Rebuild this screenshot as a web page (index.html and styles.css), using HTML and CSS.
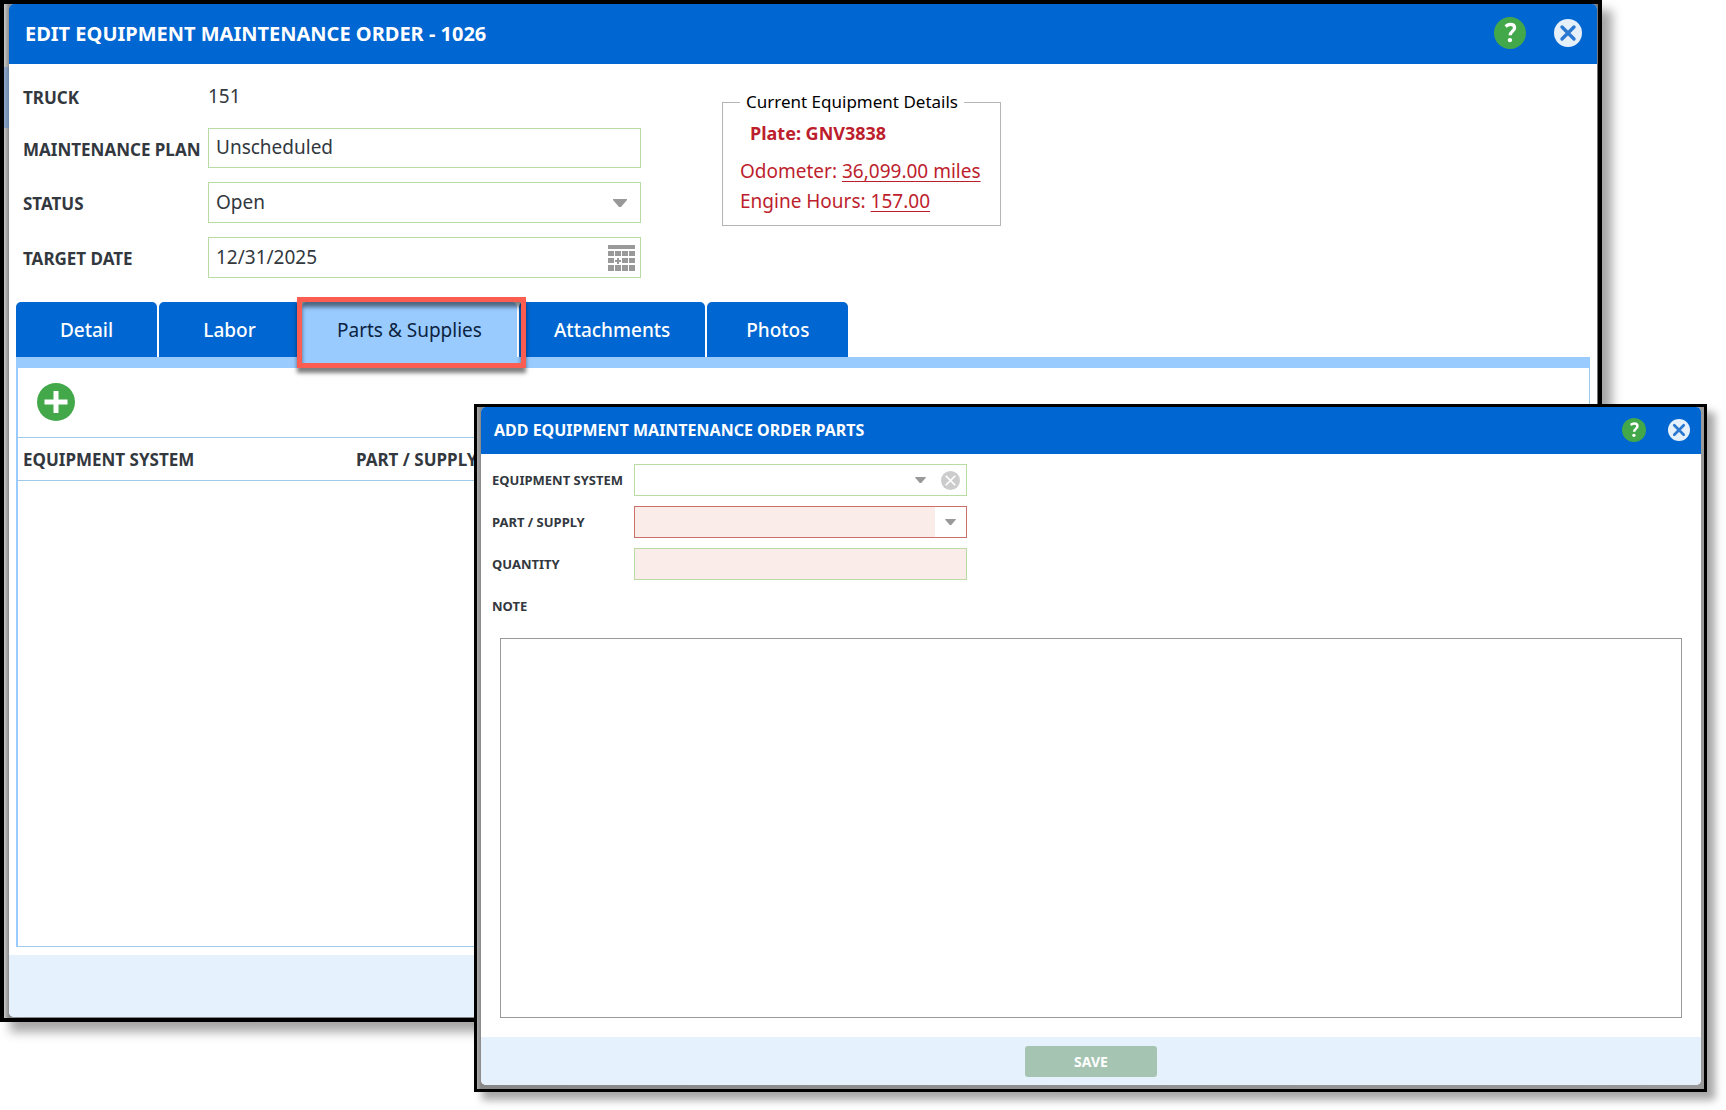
FILE: index.html
```html
<!DOCTYPE html>
<html lang="en">
<head>
<meta charset="utf-8">
<title>Edit Equipment Maintenance Order - 1026</title>
<link rel="stylesheet" href="styles.css">
</head>
<body>
<svg class="defs" width="0" height="0" aria-hidden="true">
  <symbol id="help" viewBox="0 0 32 32">
    <circle cx="16" cy="16" r="16" fill="#43a849"/>
    <path d="M11.6 9.4C13.2 8 14.900 7.400 16.400 7.400c2.500 0 4.200 1.400 4.200 3.500 0 3.100-4.400 3.500-4.400 7.400" fill="none" stroke="#fff" stroke-width="3.300"/>
    <circle cx="15.900" cy="23.100" r="2.200" fill="#fff"/>
  </symbol>
  <symbol id="close" viewBox="0 0 28 28">
    <circle cx="14" cy="14" r="14" fill="#e6f0fb"/>
    <path d="M8 8l12 12M20 8L8 20" fill="none" stroke="#2a78cf" stroke-width="3.400" stroke-linecap="round"/>
  </symbol>
  <symbol id="clear" viewBox="0 0 20 20">
    <circle cx="10" cy="10" r="10" fill="#ccc"/>
    <path d="M5 5l10 10M15 5L5 15" fill="none" stroke="#fff" stroke-width="1.800"/>
  </symbol>
  <symbol id="arrow" viewBox="0 0 14 8"><path d="M0 0h14v1L8 8H6L0 1z" fill="#999"/></symbol>
  <symbol id="plus" viewBox="0 0 38 38">
    <circle cx="19" cy="19" r="19" fill="#43a849"/>
    <path d="M19 8v22M7.500 19h23" stroke="#fff" stroke-width="5"/>
  </symbol>
  <symbol id="calendar" viewBox="0 0 27 26">
    <path fill="#999" d="M0 0h27v4H0zM0 6h6v5H0zM7 6h6v5H7zM14 6h6v5h-6zM21 6h6v5h-6zM0 13h6v5H0zM14 13h6v5h-6zM21 13h6v5h-6zM0 20h6v6H0zM7 20h6v6H7zM14 20h6v6h-6zM21 20h6v6h-6zM9 13h2v2h2v2h-2v2H9v-2H7v-2h2z"/>
  </symbol>
</svg>

<main class="desktop">
  <section class="frame frame-main">
    <div class="window">
      <header class="titlebar">
        <h1>EDIT EQUIPMENT MAINTENANCE ORDER - 1026</h1>
        <button type="button" class="icon-btn" aria-label="Help"><svg width="32" height="32"><use href="#help"/></svg></button>
        <button type="button" class="icon-btn" aria-label="Close"><svg width="28" height="28"><use href="#close"/></svg></button>
      </header>

      <div class="summary">
        <div class="form">
          <span class="label">TRUCK</span>
          <span class="value">151</span>
          <label class="label" for="plan">MAINTENANCE PLAN</label>
          <div class="field"><input id="plan" type="text" value="Unscheduled"></div>
          <label class="label" for="status">STATUS</label>
          <div class="field">
            <select id="status"><option>Open</option></select>
            <svg class="arrow" width="14" height="8"><use href="#arrow"/></svg>
          </div>
          <label class="label" for="target">TARGET DATE</label>
          <div class="field">
            <input id="target" type="text" value="12/31/2025">
            <button type="button" class="icon-btn calendar" aria-label="Choose date"><svg width="27" height="26"><use href="#calendar"/></svg></button>
          </div>
        </div>
        <fieldset class="details">
          <legend>Current Equipment Details</legend>
          <p class="plate">Plate: GNV3838</p>
          <p>Odometer: <a href="#">36,099.00 miles</a></p>
          <p>Engine Hours: <a href="#">157.00</a></p>
        </fieldset>
      </div>

      <div class="tabs" role="tablist">
        <button type="button" role="tab" class="tab">Detail</button>
        <button type="button" role="tab" class="tab">Labor</button>
        <button type="button" role="tab" class="tab active" aria-selected="true">Parts &amp; Supplies<span class="highlight"></span></button>
        <button type="button" role="tab" class="tab">Attachments</button>
        <button type="button" role="tab" class="tab">Photos</button>
      </div>
      <div class="panel">
        <div class="toolbar">
          <button type="button" class="icon-btn" aria-label="Add part"><svg width="38" height="38"><use href="#plus"/></svg></button>
        </div>
        <table class="grid">
          <thead><tr><th class="col-system">EQUIPMENT SYSTEM</th><th>PART / SUPPLY</th></tr></thead>
        </table>
      </div>
      <footer class="footer"></footer>
    </div>
  </section>

  <section class="frame frame-popup">
    <div class="window">
      <header class="titlebar">
        <h2>ADD EQUIPMENT MAINTENANCE ORDER PARTS</h2>
        <button type="button" class="icon-btn" aria-label="Help"><svg width="24" height="24"><use href="#help"/></svg></button>
        <button type="button" class="icon-btn" aria-label="Close"><svg width="22" height="22"><use href="#close"/></svg></button>
      </header>
      <div class="form">
        <label class="label" for="system">EQUIPMENT SYSTEM</label>
        <div class="field">
          <select id="system"><option></option></select>
          <svg class="arrow" width="11" height="6"><use href="#arrow"/></svg>
          <button type="button" class="icon-btn" aria-label="Clear"><svg width="19" height="19"><use href="#clear"/></svg></button>
        </div>
        <label class="label" for="part">PART / SUPPLY</label>
        <div class="field invalid">
          <select id="part"><option></option></select>
          <svg class="arrow" width="11" height="6"><use href="#arrow"/></svg>
        </div>
        <label class="label" for="quantity">QUANTITY</label>
        <div class="field required"><input id="quantity" type="text"></div>
        <label class="label" for="note">NOTE</label>
      </div>
      <textarea id="note" class="note"></textarea>
      <footer class="footer"><button type="button" class="save">SAVE</button></footer>
    </div>
  </section>
</main>
</body>
</html>
```
FILE: styles.css
```css
* { box-sizing: border-box; }

body {
  margin: 0;
  background: #fff;
  color: #32383e;
  font-family: "Noto Sans", "Open Sans", sans-serif;
  font-size: 18px;
}

.defs { position: absolute; }
svg { display: block; }
h1, h2, p { margin: 0; }

button, input, select, textarea {
  font: inherit;
  color: inherit;
}

.icon-btn {
  padding: 0;
  border: 0;
  background: none;
}

.desktop {
  position: relative;
  min-height: 100vh;
  overflow: hidden;
}

/* Window frames */

.frame {
  border: 4px solid #000;
  background: #fff;
  box-shadow: 10px 10px 10px rgba(0, 0, 0, 0.35);
}

.frame-main {
  margin-right: 124px;
  padding: 0 1px 1px 5px;
  background:
    linear-gradient(90deg, #8fa9cb, #6d87a8) 0 63px / 5px 61px no-repeat,
    linear-gradient(90deg, #c8c8c8, #8c8c8c 5px, #777);
}

.frame-popup {
  position: absolute;
  top: 404px;
  left: 474px;
  right: 19px;
  padding: 0 3px 4px 4px;
  border-width: 3px;
  background: linear-gradient(90deg, #aaa, #888 4px, #999);
  box-shadow: 8px 8px 8px rgba(0, 0, 0, 0.35);
}

.window {
  overflow: hidden;
  border-radius: 5px;
  background: #fff;
}

.titlebar {
  display: flex;
  align-items: center;
  background: #0066d1;
  color: #fff;
}

.titlebar h1, .titlebar h2 {
  flex: 1;
  font-weight: 700;
}

.frame-main .titlebar {
  gap: 28px;
  height: 60px;
  padding: 0 15px 2px 16px;
}

.frame-popup .titlebar {
  gap: 22px;
  height: 47px;
  padding: 0 11px 1px 13px;
}

.titlebar h1 { font-size: 20px; }
.titlebar h2 { font-size: 16px; }

/* Forms */

.form {
  display: grid;
  align-items: center;
}

.label { font-weight: 700; }

.field {
  display: flex;
  align-items: center;
  height: 100%;
  border: 1px solid #b9dca4;
  background: #fff;
}

.field input, .field select {
  flex: 1;
  min-width: 0;
  height: 100%;
  padding: 0 7px 2px;
  border: 0;
  outline: 0;
  appearance: none;
  background: transparent;
}

.summary {
  display: flex;
  align-items: flex-start;
  gap: 81px;
  padding: 14px 14px 24px;
}

.summary .form {
  grid-template-columns: 185px 433px;
  grid-template-rows: 36px 40px 41px 41px;
  row-gap: 14px;
  font-size: 19px;
}

.summary .label {
  padding-top: 2px;
  font-size: 17px;
}

.summary .arrow { margin-right: 13px; }
.summary .calendar { margin-right: 5px; }

.details {
  width: 279px;
  height: 137px;
  margin: 11px 0 0;
  padding: 3px 17px 0;
  border: 1px solid #b5b5b5;
  color: #bd1e2d;
  font-size: 19px;
  line-height: 30px;
}

.details legend {
  padding: 0 6px;
  color: #000;
  font-size: 17px;
  line-height: 26px;
}

.details .plate {
  margin-bottom: 8px;
  padding-left: 10px;
  font-size: 18px;
  font-weight: 700;
}

.details a {
  color: inherit;
  text-underline-offset: 3px;
}

/* Tabs */

.tabs {
  display: flex;
  gap: 2px;
  margin: 0 7px;
  border-bottom: 11px solid #99cbff;
}

.tab {
  position: relative;
  min-width: 141px;
  height: 55px;
  padding: 0 35px;
  border: 0;
  border-radius: 5px 5px 0 0;
  background: #0066d1;
  color: #fff;
  font-size: 19px;
  font-weight: 500;
}

.tab.active {
  background: #99cbff;
  color: #0b2340;
  font-weight: 400;
}

.highlight {
  position: absolute;
  inset: -5px -9px -11px -5px;
  z-index: 1;
  border: 5px solid #fb5d50;
  box-shadow: 0 5px 4px rgba(0, 0, 0, 0.5), inset 0 5px 4px rgba(0, 0, 0, 0.5);
}

.panel {
  min-height: 579px;
  margin: 0 7px 8px;
  border: 1px solid #9fcbea;
  border-width: 0 1px 1px 2px;
  border-left-color: #99cbff;
}

.toolbar { padding: 15px 19px; height: 69px; }

.grid {
  width: 100%;
  border-collapse: collapse;
  table-layout: fixed;
}

.grid th {
  height: 43px;
  padding: 0 5px;
  border: solid #9fcbea;
  border-width: 1px 0;
  font-size: 17px;
  text-align: left;
}

.grid .col-system { width: 333px; }

.footer {
  display: flex;
  align-items: center;
  justify-content: center;
  height: 62px;
  background: #e5f1fd;
}

/* Add parts popup */

.frame-popup .form {
  grid-template-columns: 142px 333px;
  grid-template-rows: repeat(4, 32px);
  row-gap: 10px;
  padding: 10px 11px 16px;
}

.frame-popup .label { font-size: 13px; }
.frame-popup .field { font-size: 13px; }
.frame-popup .field .icon-btn { margin: 0 6px 0 15px; }

.frame-popup .invalid {
  border-color: #cc6f6a;
}

.invalid select {
  background: #faece9;
}

.frame-popup .field.invalid .arrow { margin: 0 10px; }
.frame-popup .required { background: #faece9; }

.note {
  display: block;
  width: calc(100% - 38px);
  height: 380px;
  margin: 0 19px 19px;
  border: 1px solid #999;
  outline: 0;
  resize: none;
}

.frame-popup .footer { height: 48px; }

.save {
  width: 132px;
  height: 31px;
  padding: 0;
  border: 0;
  border-radius: 3px;
  background: #a5c4b1;
  color: #fff;
  font-size: 14px;
  font-weight: 700;
}
```
